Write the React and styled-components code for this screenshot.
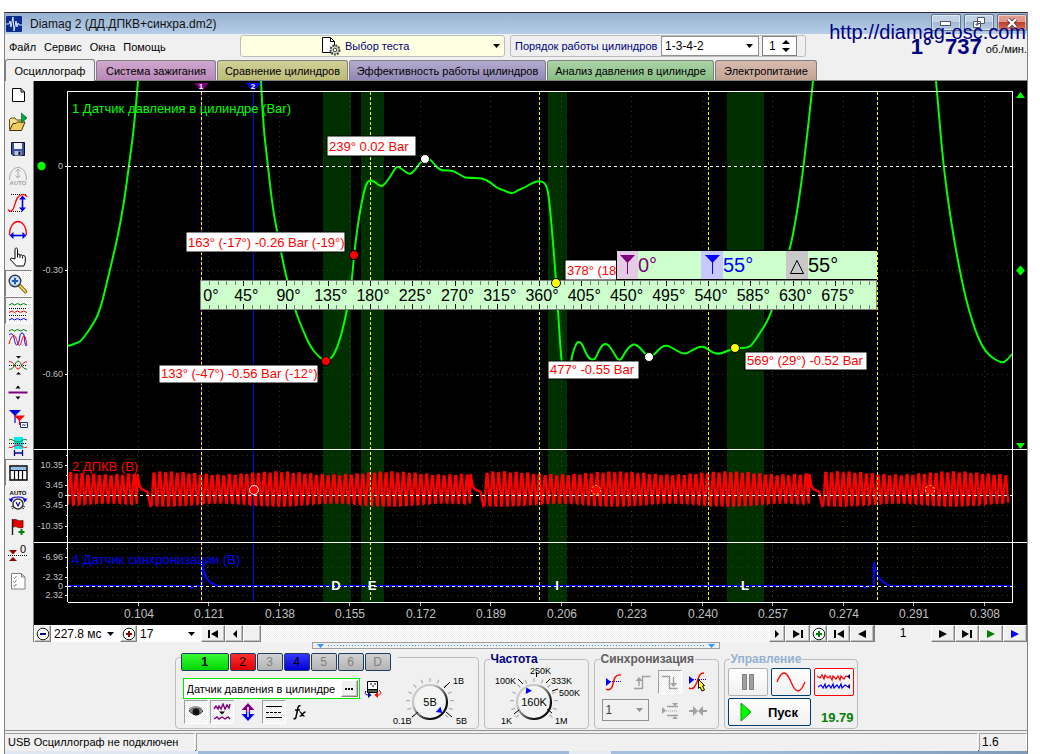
import React, { useState } from 'react';
import styled, { createGlobalStyle, css } from 'styled-components';

const GlobalStyle = createGlobalStyle`
    * { box-sizing: border-box; }
    body {
        margin: 0;
        background: #fff;
        color: #000;
        font-family: "Liberation Sans", Arial, sans-serif;
        font-size: 11px;
    }
    button, input, select {
        font: inherit;
        color: inherit;
        margin: 0;
    }
    svg { flex-shrink: 0; }
    svg text { font-family: "Liberation Sans", Arial, sans-serif; }
`

const dither = css`
    background: repeating-conic-gradient(#fff 0 25%, #ececec 0 50%) 0 0 / 2px 2px;
`

const Page = styled.div`
    padding: 12px 12px 0 4px;
`

const Window = styled.main`
    background: #f0f0f0;
    border-left: 1px solid #808080;
    border-right: 1px solid #808080;
    border-top: 1px solid #302c34;
    position: relative;
`

const TitleBar = styled.header`
    display: flex;
    align-items: center;
    height: 21px;
    padding: 0 0 0 1px;
    gap: 8px;
    font-size: 12px;
    color: #111;
    background: linear-gradient(#98b2cf, #b5cde8);
`

const WindowButtons = styled.div`
    display: flex;
    gap: 3px;
    margin-left: auto;
    align-self: flex-start;
    padding-top: 1px;
`

const WindowButton = styled.button`
    width: 30px;
    height: 17px;
    padding: 0;
    display: flex;
    align-items: center;
    justify-content: center;
    border: 1px solid #5f7590;
    border-radius: 2px;
    box-shadow: inset 0 0 0 1px rgba(255, 255, 255, .5);
    background: ${({ $close }) => $close
        ? 'linear-gradient(#e39a8c 45%, #c0402a 50%, #d2705c)'
        : 'linear-gradient(#c3d3e6 45%, #a3b9d3 50%, #b8cce2)'};
`

const SiteLink = styled.a`
    position: absolute;
    top: 7px;
    right: 1px;
    font-size: 20px;
    line-height: 24px;
    color: #000080;
    text-decoration: none;
`

const MenuRow = styled.div`
    display: flex;
    height: 25px;
    padding-top: 1px;
`

const Menu = styled.nav`
    display: flex;
    align-items: center;
    gap: 8px;
    flex: 0 0 235px;
    padding-left: 4px;
    height: 23px;
`

const MenuItem = styled.button`
    border: 0;
    padding: 0;
    background: none;
`

const TestButton = styled.button`
    display: flex;
    align-items: center;
    justify-content: center;
    gap: 4px;
    width: 265px;
    height: 22px;
    margin-right: 5px;
    padding: 0 4px 0 80px;
    color: #000080;
    background: #ffffe1;
    border: 1px solid #bdbdbd;
    border-radius: 3px;
    svg:last-child { margin-left: auto; }
`

const OrderGroup = styled.div`
    display: flex;
    align-items: center;
    height: 22px;
    width: 296px;
    padding: 0 8px 0 4px;
    gap: 3px;
    color: #000080;
    border: 1px solid #bdbdbd;
    border-radius: 3px;
    label { flex: 1; white-space: nowrap; }
`

const SelectBox = styled.span`
    position: relative;
    display: flex;
    width: ${({ $width }) => $width}px;
    height: ${({ $height }) => $height}px;
    color: ${({ $muted }) => $muted ? '#404040' : '#000'};
    select {
        appearance: none;
        width: 100%;
        height: 100%;
        padding: 0 16px 0 3px;
        font-size: 12px;
        background: ${({ $muted }) => $muted ? '#f0f0f0' : '#fff'};
        border: ${({ $flat }) => $flat ? '0' : '1px solid #909090'};
        border-radius: 0;
    }
    svg {
        position: absolute;
        right: 6px;
        top: 50%;
        margin-top: -2px;
        pointer-events: none;
    }
`

const Spinner = styled.span`
    display: flex;
    align-items: center;
    width: 35px;
    height: 20px;
    padding-right: 5px;
    background: #fff;
    border: 1px solid #808080;
    input {
        width: 100%;
        min-width: 0;
        padding: 0 0 0 6px;
        border: 0;
        outline: 0;
        background: none;
        color: #000;
        font-size: 12px;
    }
`

const Rpm = styled.div`
    display: flex;
    align-items: center;
    margin-left: auto;
    height: 24px;
    color: #000080;
    font-size: 22px;
    font-weight: bold;
    strong:first-child { margin-right: 13px; }
    small {
        margin-left: 4px;
        padding-top: 3px;
        color: #000;
        font-size: 11px;
        font-weight: normal;
    }
`

const TabBar = styled.div`
    display: flex;
    align-items: flex-end;
    height: 22px;
    gap: 1px;
    border-bottom: 1px solid #808080;
`

const Tab = styled.button`
    height: ${({ $active }) => $active ? 22 : 20}px;
    margin-bottom: ${({ $active }) => $active ? -1 : 0}px;
    width: ${({ $width }) => $width}px;
    padding: 0;
    white-space: nowrap;
    border: 1px solid #808080;
    border-bottom: 0;
    border-radius: 3px 3px 0 0;
    background: ${({ $color }) => $color};
`

const Body = styled.div`
    display: flex;
`

const Toolbar = styled.div`
    flex: 0 0 29px;
    display: flex;
    flex-direction: column;
    border-right: 1px solid #808080;
`

const Tool = styled.button`
    width: 27px;
    height: 27px;
    padding: 0;
    display: flex;
    align-items: center;
    justify-content: flex-start;
    border: 1px solid transparent;
    background: none;
    ${({ $pressed }) => $pressed && css`
        ${dither}
        border-color: #808080 #fff #fff #808080;
    `}
`

const Workspace = styled.div`
    flex: 1;
    min-width: 0;
    display: flex;
    flex-direction: column;
`

const Plot = styled.svg`
    display: block;
    width: 100%;
    height: auto;
    background: #000;
`

const ScrollRow = styled.div`
    display: flex;
    height: 17px;
    background: #f0f0f0;
`

const NavButton = styled.button`
    width: ${({ $width }) => $width}px;
    height: 17px;
    padding: 0;
    display: flex;
    align-items: center;
    justify-content: center;
    background: #f0f0f0;
    border: 1px solid;
    border-color: #fff #808080 #808080 #fff;
    box-shadow: inset -1px -1px 0 #c0c0c0;
`

const Track = styled.div`
    flex: 1;
    ${dither}
`

const PageNumber = styled.output`
    width: 57px;
    text-align: center;
    font-size: 12px;
    line-height: 17px;
    border-left: 1px solid #808080;
`

const Splitter = styled.div`
    display: flex;
    align-items: center;
    justify-content: space-between;
    width: 408px;
    height: 7px;
    margin: 0 auto;
    padding: 0 4px;
    border: 1px solid #a0a0a0;
    i {
        flex: 1;
        margin: 0 4px;
        height: 1px;
        background: repeating-linear-gradient(90deg, #3399ff 0 1px, transparent 1px 3px);
    }
    svg { display: block; }
`

const Dock = styled.div`
    display: flex;
    justify-content: center;
    gap: 5px;
    height: 81px;
    padding-top: 4px;
`

const Group = styled.fieldset`
    width: ${({ $width }) => $width}px;
    height: 76px;
    margin: 0;
    padding: 0 3px;
    min-width: 0;
    border: 1px solid #bdbdbd;
    border-radius: 4px;
    legend {
        height: 12px;
        padding: 0 1px;
        margin-left: 2px;
        font-size: 12px;
        line-height: 12px;
        font-weight: bold;
        color: ${({ $color }) => $color};
    }
`

const ChannelGroup = styled.section`
    display: flex;
    width: 304px;
    height: 72px;
    margin-top: 4px;
    border: 1px solid #bdbdbd;
    border-radius: 4px;
`

const ChannelColumn = styled.div`
    width: 210px;
    padding-left: 5px;
    margin-top: -5px;
`

const ChannelRow = styled.div`
    display: flex;
    gap: 1px;
    width: 217px;
    background: #f0f0f0;
`

const Channel = styled.button`
    width: ${({ $wide }) => $wide ? 48 : 26}px;
    height: 18px;
    padding: 0;
    font-size: 12px;
    font-weight: ${({ $wide }) => $wide ? 'bold' : 'normal'};
    color: ${({ $on }) => $on ? '#000' : '#808080'};
    background: ${({ $on }) => $on || 'linear-gradient(#d2d2d2, #b4b4b4)'};
    border: 1px solid #1d3c66;
    border-radius: 2px;
`

const SensorRow = styled.div`
    display: flex;
    align-items: center;
    gap: 4px;
    margin: 7px 0 1px 2px;
`

const SensorField = styled.div`
    display: flex;
    align-items: center;
    width: 177px;
    height: 21px;
    padding-right: 1px;
    background: #fff;
    border: 1px solid #00e800;
    input {
        flex: 1;
        min-width: 0;
        padding: 0 0 0 3px;
        border: 0;
        outline: 0;
        background: none;
    }
`

const ToolRow = styled.div`
    display: flex;
    gap: 2px;
    margin-left: 3px;
`

const SmallTool = styled.button`
    width: 24px;
    height: 24px;
    padding: 0;
    display: flex;
    align-items: center;
    justify-content: center;
    border: 1px solid transparent;
    background: none;
    ${({ $pressed }) => $pressed && css`
        ${dither}
        border-color: #a0a0a0 #fff #fff #a0a0a0;
    `}
`

const Knob = styled.svg`
    display: block;
    overflow: visible;
`

const SyncGrid = styled.div`
    display: grid;
    grid-template-columns: repeat(4, 24px);
    column-gap: 4px;
    row-gap: 5px;
    padding: 5px 0 0 4px;
    > span { grid-column: span 2; }
`

const ControlGrid = styled.div`
    display: grid;
    grid-template-columns: 40px 40px 40px;
    gap: 2px 3px;
    padding-top: 3px;
`

const ControlButton = styled.button`
    display: flex;
    align-items: center;
    justify-content: center;
    gap: 16px;
    height: 28px;
    padding: 0;
    background: linear-gradient(#fff, #f0f0f0);
    border: 1px solid ${({ $edge }) => $edge};
    border-radius: 2px;
    font-size: 13px;
    font-weight: bold;
    grid-column: span ${({ $span }) => $span || 1};
`

const Voltage = styled.output`
    align-self: end;
    justify-self: end;
    padding-bottom: 1px;
    color: #008000;
    font-size: 13px;
    font-weight: bold;
`

const StatusBar = styled.footer`
    display: grid;
    grid-template-columns: 190px 1fr 48px;
    gap: 1px;
    height: 20px;
    padding-top: 2px;
    border-top: 1px solid #909090;
    span {
        padding-left: 3px;
        line-height: 16px;
        white-space: nowrap;
        border: 1px solid;
        border-color: #a0a0a0 #fff #f0f0f0 #a0a0a0;
    }
    span:first-child { border-left-color: #f0f0f0; padding-left: 2px; }
    span:last-child { font-size: 12px; padding-left: 2px; }
`

const TaskStrip = styled.div`
    height: 4px;
    border-top: 1px solid #40454c;
    background: linear-gradient(90deg, #dfe8f2 0 193px, #9cb9da 193px 564px, #e4ebf3 564px 606px, #a4bfdd 606px 70%, #7d9ab9);
`

const range = n => Array.from({ length: n }, (_, i) => i)

function ArrowDown({ color = '#000' }) {
    return <svg width="7" height="4" viewBox="0 0 7 4"><path d="M0 0h7L3.5 4z" fill={color} /></svg>
}

// ---- toolbar icons, all on a 24x24 grid ----

const dots = { stroke: '#000', strokeDasharray: '1 1', fill: 'none' }

const icons = {
    new: <path d="M6.500 5.500h8.500l3.500 3.500v9.500h-12zM15 5.500v3.500h3.500" fill="#fff" stroke="#000" />,
    open: <>
        <path d="M3.500 19V9.500l1.500-1.500h4l1.500 2h6v3" fill="#f5df8a" stroke="#5c4a10" />
        <path d="M3.500 20.500l3.500-7h3l1.500-1.500h7.500l-3.500 8.500z" fill="#f0cf60" stroke="#3c3010" />
        <path d="M15.500 3v10l5.500-5z" fill="#00a838" stroke="#00501c" strokeWidth=".6" />
    </>,
    save: <>
        <path d="M5.500 5.500h13v13h-11.500l-1.500-1.500z" fill="#3f4f9c" stroke="#101030" />
        <path d="M8 6h8v6H8z" fill="#eef2ff" />
        <path d="M8.500 14h7v4.500h-7z" fill="#b8c0d0" />
        <path d="M12.500 14.500h2v3.500h-2z" fill="#101030" />
    </>,
    autoHeight: <>
        <path d="M3.500 16c0-8 4-12.500 8.500-12.500s8.500 4.500 8.500 12.500M12 5v9M9.500 7.500L12 5l2.500 2.500M9.500 11.500L12 14l2.500-2.500" fill="none" stroke="#a8a8a8" />
        <text x="12" y="21" fontSize="6" fontWeight="bold" textAnchor="middle" fill="#a0a0a0">AUTO</text>
    </>,
    height: <>
        <path d="M5 3.500h16M3 20.500h14" {...dots} />
        <path d="M2 18.500c1 2 4 2.500 5 0 3-7 3-13 8-14.500 3-1 5 0 6 2" fill="none" stroke="#f00" strokeWidth="1.300" />
        <path d="M16.500 6v13" stroke="#0000e8" strokeWidth="1.600" />
        <path d="M16.500 4.500l3.500 4h-7zM16.500 20.500l3.500-4h-7z" fill="#0000e8" />
    </>,
    width: <>
        <path d="M3.500 17v-1c0-7 4-12.500 8.500-12.500s8.500 5.500 8.500 12.500v1" fill="none" stroke="#f00" strokeWidth="1.300" />
        <path d="M6 17.500h12" stroke="#0000e8" strokeWidth="1.600" />
        <path d="M3.500 17.500l4-3.500v7zM20.500 17.500l-4-3.500v7z" fill="#0000e8" />
    </>,
    hand: <path d="M9 14V4.500c0-2 2.500-2 2.500 0V10c.5-1.500 2.500-1.200 2.500.5.500-1.300 2.500-1 2.500.7.500-1 2.800-.7 2.800 1V17l-1.500 4h-7.500l-5.500-6c-1-1.500.5-2.500 2-1.500zM11.500 10v2.500M14 10.500v2.500M16.500 11.500v2" fill="#fff" stroke="#000" />,
    zoom: <>
        <path d="M13.500 13.500l6 6" stroke="#8a6a10" strokeWidth="3.600" strokeLinecap="round" />
        <path d="M14 14l5.500 5.500" stroke="#ffd860" strokeWidth="1.600" strokeLinecap="round" />
        <circle cx="9" cy="9" r="5.800" fill="#cfe4fb" stroke="#303c50" strokeWidth="1.400" />
        <path d="M9 5.800v6.400M5.800 9h6.400" stroke="#2458b8" strokeWidth="2" />
    </>,
    stacked: <>
        <path d="M3 6l3-1.500 2.500 1.500 3-1.500 3 1.500 3-1.500 3.500 1.500" fill="none" stroke="#008000" />
        <path d="M3 9.500h18M3 16.500h18" {...dots} />
        <path d="M3 13.500l3-1.500 2.500 1.500 3-1.500 3 1.500 3-1.500 3.500 1.500" fill="none" stroke="#f00" />
        <path d="M3 21l3-1.500 2.500 1.500 3-1.500 3 1.500 3-1.500 3.500 1.500" fill="none" stroke="#00f" />
    </>,
    overlaid: <>
        <path d="M3 5l3-1.500 2.500 1.500 3-1.500 3 1.500 3-1.500 3.500 1.500" fill="none" stroke="#008000" />
        <path d="M3 9c2-2 4-2 5 3s2 9 4 6 1-11 4-11 2 6 3 10 1 3 2 2" fill="none" stroke="#00f" />
        <path d="M3 18c2-8 5-11 7-6s2 9 4 7 2-9 4-9 2 6 3 9" fill="none" stroke="#f00" />
    </>,
    cross: <>
        <path d="M3 12.500h18" {...dots} />
        <path d="M3 9c5-2 6 7 9 7s4-8 9-7" fill="none" stroke="#f00" />
        <path d="M3 16c5 2 6-8 9-8s4 9 9 8" fill="none" stroke="#008000" />
        <path d="M10 3h5l-2.500 2.500zM10 21.500h5l-2.500-2.500z" fill="#000" />
    </>,
    divider: <>
        <path d="M2.500 12.500h19" stroke="#800080" strokeWidth="2" />
        <path d="M9.500 8.500h5l-2.500-3zM9.500 16.500h5l-2.500 3z" fill="#000" />
    </>,
    flags: <>
        <path d="M3 3h12l-6 6z" fill="#0000e8" /><path d="M9 6v10" stroke="#0000e8" strokeWidth="1.200" />
        <path d="M8 8.500h11l-5.500 5.500z" fill="#f00" /><path d="M13.500 10v8" stroke="#f00" strokeWidth="1.200" />
        <path d="M14.500 15.500h7v5h-7z" fill="#fff" stroke="#203080" /><path d="M16 18.500l1.500-1 1.500 1 1-1" fill="none" stroke="#203080" />
    </>,
    span: <>
        <path d="M8 3h9v12H8z" fill="#00e8f0" />
        <path d="M3 6c3-2 5 2 9 2s5-4 9-2" fill="none" stroke="#008000" />
        <path d="M3 9.500h18" {...dots} />
        <path d="M3 13c3 2 5-2 9-2s5 4 9 2" fill="none" stroke="#f00" />
        <path d="M8.500 16v6M16.500 16v6M9 19h7" stroke="#0000a0" strokeWidth="1.300" />
    </>,
    table: <>
        <path d="M4 5h17v14H4z" fill="#fff" stroke="#000" strokeWidth="1.400" />
        <path d="M5 6h15v3H5z" fill="#8cc0f0" />
        <path d="M4 9.500h17M8.500 9v10M12.500 9v10M16.500 9v10" stroke="#000" strokeWidth="1.200" />
    </>,
    autoVolt: <>
        <text x="12" y="7" fontSize="6" fontWeight="bold" textAnchor="middle">AUTO</text>
        <path d="M4 13c1-3 4-4 8-4s7 1 8 4" fill="none" stroke="#0000e8" strokeWidth="1.200" />
        <path d="M2.500 10.500l3 4 1.500-3.500zM21.500 10.500l-3 4-1.500-3.500z" fill="#0000e8" />
        <circle cx="12" cy="16" r="5" fill="#fff" stroke="#303030" strokeWidth="1.400" />
        <path d="M10 14l2 4 2-4" fill="none" stroke="#0000c0" strokeWidth="1.200" />
        <path d="M5 19l2-1M19 19l-2-1M6 21l2-1.500M18 21l-2-1.500" stroke="#303030" />
    </>,
    flag: <>
        <path d="M6.500 4v16" stroke="#202020" strokeWidth="1.400" />
        <path d="M7 5c3-2 5 2 10 .5v7c-4 1.500-6-2-10-.5z" fill="#e80000" stroke="#700000" strokeWidth=".8" />
        <path d="M15.500 14v6M12.500 17h6" stroke="#008000" strokeWidth="2" />
    </>,
    zero: <>
        <path d="M2 13.500h19" {...dots} />
        <path d="M3 8h8l-4 4.500zM3 19h8l-4-4z" fill="#900000" />
        <text x="14" y="11" fontSize="11">0</text>
    </>,
    checklist: <>
        <path d="M5.500 4.500h10l3.500 3.500v12h-13.500zM15.500 4.500v3.500h3.500" fill="#fff" stroke="#808080" />
        <path d="M7.500 8.500l1 1 2-2.500M7.500 12.500l1 1 2-2.500M7.500 16.500l1 1 2-2.500" fill="none" stroke="#808080" />
    </>,
}

const tools = [
    ['new', 'Новый'], ['open', 'Открыть'], ['save', 'Сохранить'], ['autoHeight', 'Авто'],
    ['height', 'Размах'], ['width', 'Период'], ['hand', 'Сдвиг'], ['zoom', 'Масштаб', true],
    ['stacked', 'Раздельно', true], ['overlaid', 'Вместе'], ['cross', 'Наложение'], ['divider', 'Граница'],
    ['flags', 'Маркеры'], ['span', 'Интервал'], ['table', 'Таблица', true], ['autoVolt', 'Автомасштаб'],
    ['flag', 'Метка'], ['zero', 'Ноль'], ['checklist', 'Отчёт'],
]

// ---- plot ----

const gridX = [138, 208, 279, 349, 420, 490, 561, 631, 702, 772, 843, 913, 984]
const gridY = [270, 374, 455, 465, 475, 485, 505, 515, 526, 536, 548, 557, 567, 577, 595]
const timeLabels = ['0.104', '0.121', '0.138', '0.155', '0.172', '0.189', '0.206', '0.223', '0.240', '0.257', '0.274', '0.291', '0.308']
const valueLabels = [
    [166, '0'], [270, '-0.30'], [374, '-0.60'],
    [465, '10.35'], [485, '3.45'], [495, '0'], [505, '-3.45'], [526, '-10.35'],
    [557, '-6.96'], [577, '-2.32'], [586, '0'], [595, '2.32'],
]
const phases = [[323, 28, 'D', 336], [361, 23, 'E', 372], [548, 19, 'I', 557], [727, 37, 'L', 745]]

const pressure = [
    '68,346 72,345 76,343 80,342 84,337 92,326 100,311 108,278 113,257 118,235 124,203 129,165 134,128 138,81',
    '261,81 263,123 268,167 273,210 278,236 282,257 287,280 295,310 302,328 310,346 317,355 322,359 326,361 332,358 338,346 343,328 347,310 352,280 354,255 358,223 363,195 367,182 371,180 375,182 381,187 385,184 390,177 396,167 399,167 403,170 410,175 415,170 420,163 425,158 430,159 434,164 441,171 453,170 463,177 469,178 482,178 490,182 497,188 503,190 510,193 514,193 518,190 524,188 532,183 538,181 544,182 547,187 549,198 552,230 556,280 558,310 561,357 563,370 570,370 572,355 575,347 577,342 581,342 585,351 589,359 595,360 598,352 603,344 608,344 614,353 618,360 621,360 625,352 632,344 637,345 642,350 649,358 655,354 661,347 667,345 674,349 683,354 688,353 694,349 702,346 708,349 713,353 720,354 727,351 735,348 747,348 752,345 760,333 767,322 772,310 781,282 790,248 794,230 801,187 808,128 813,81',
    '936,81 940,128 944,170 950,215 958,262 966,300 975,330 983,348 991,357 998,361 1003,363 1008,359 1012,354',
]

// rounds the corners between samples by curving through the midpoints
function smooth(points) {
    const list = points.split(' ').map(pair => pair.split(',').map(Number))
    const last = list[list.length - 1]
    const curves = list.slice(1, -1).map(([x, y], i) => {
        const [nx, ny] = list[i + 2]
        return `Q${x} ${y} ${(x + nx) / 2} ${(y + ny) / 2}`
    })
    return `M${list[0].join(' ')}${curves.join('')}L${last.join(' ')}`
}

// toothed wheel signal with one missing tooth pair per turn
function crankSignal() {
    const gaps = [134, 469, 808]
    const points = []
    let x = 68
    let k = 0
    while (x < 1008) {
        const gap = gaps.find(g => x >= g && x < g + 6)
        if (gap) {
            points.push([x, 474], [x + 2, 486], [x + 4, 489], [x + 10, 492], [x + 12, 502], [x + 13, 506])
            x += 14
        } else {
            const swell = Math.sin((x - 134) / 338 * Math.PI * 6)
            const top = 474 - swell * 1.500 + (k % 2)
            const bottom = 504 + swell * 1.500
            points.push([x, bottom], [x + 1, 488], [x + 2, top], [x + 3, top], [x + 4, 491], [x + 5, bottom])
            x += 5.800
        }
        k += 1
    }
    return points.map(([px, py]) => `${px.toFixed(1)},${py.toFixed(1)}`).join(' ')
}

const callouts = [
    { x: 327, y: 136, w: 89, h: 20, text: '239° 0.02 Bar' },
    { x: 186, y: 232, w: 159, h: 20, text: '163° (-17°) -0.26 Bar (-19°)' },
    { x: 159, y: 365, w: 159, h: 18, text: '133° (-47°) -0.56 Bar (-12°)' },
    { x: 565, y: 260, w: 52, h: 20, text: '378° (18' },
    { x: 548, y: 361, w: 91, h: 18, text: '477° -0.55 Bar' },
    { x: 745, y: 352, w: 122, h: 18, text: '569° (29°) -0.52 Bar' },
]

function AngleRuler() {
    const step = 676 / 80
    return (
        <g>
            <rect x="200.500" y="280.500" width="676" height="29" fill="#ccffcc" stroke="#808080" />
            <g shapeRendering="crispEdges">
                {range(79).map(i => {
                    const major = (i + 1) % 5 === 0
                    const x = Math.round(201 + (i + 1) * step)
                    const len = major ? 5 : 4
                    return <path key={i} d={`M${x}.5 281v${len}M${x}.5 309v-${len}`} stroke={major ? '#000' : '#808080'} />
                })}
            </g>
            {range(16).map(i => (
                <text key={i} x={i ? 204 + i * step * 5 : 211} y="301" fontSize="16" textAnchor="middle">{i * 45}°</text>
            ))}
        </g>
    )
}

function MarkerPanel() {
    return (
        <g>
            <rect x="616" y="250" width="261" height="30" fill="#000" />
            <rect x="617" y="251" width="260" height="28" fill="#ccffcc" />
            <rect x="617" y="251" width="21" height="28" fill="#e4cce4" />
            <rect x="701" y="251" width="22" height="28" fill="#c8c8ff" />
            <rect x="786" y="251" width="22" height="28" fill="#c8c8c8" />
            <path d="M620 255h15l-7.500 8z" fill="#800080" />
            <path d="M627.500 262v12" stroke="#800080" />
            <path d="M705 255h15l-7.500 8z" fill="#00f" />
            <path d="M712.500 262v12" stroke="#00f" />
            <path d="M790.500 273.500h13l-6.500-13z" fill="none" stroke="#000" />
            <g fontSize="20">
                <text x="638" y="272" fill="#800080">0°</text>
                <text x="723" y="272" fill="#00f">55°</text>
                <text x="808" y="272">55°</text>
            </g>
        </g>
    )
}

function Oscillogram() {
    return (
        <Plot viewBox="34 81 993 544" role="img" aria-label="Осциллограмма">
            {phases.map(([x, w]) => <rect key={x} x={x} y="92" width={w} height="510" fill="#003000" />)}
            <g stroke="#3a3a14" strokeDasharray="1 4" shapeRendering="crispEdges">
                {gridX.map(x => <path key={x} d={`M${x}.5 96V602`} />)}
                {gridY.map(y => <path key={y} d={`M72 ${y}.5H1012`} />)}
            </g>

            <g shapeRendering="crispEdges">
                <path d="M201.500 92V602" stroke="#800080" />
                <path d="M253.500 92V602" stroke="#00f" />
            </g>

            <polyline points={crankSignal()} fill="none" stroke="#f00" strokeWidth="2.400" />
            <path d="M68 586H190l2 2 3-2h7V564l2 8 3 7 4 4 6 3H862l3 2 3-2h6V562l2 9 3 7 4 4 7 4H1012" fill="none" stroke="#00f" strokeWidth="2" />
            {pressure.map(points => <path key={points} d={smooth(points)} fill="none" stroke="#0f0" strokeWidth="2" />)}

            <g stroke="#ff0" strokeDasharray="3 2" shapeRendering="crispEdges">
                {[201, 370, 539, 708, 877].map(x => <path key={x} d={`M${x}.5 92V602`} />)}
            </g>
            <g stroke="#fff" strokeDasharray="3 3" shapeRendering="crispEdges">
                {[166, 495, 586].map(y => <path key={y} d={`M68 ${y}.5H1012`} />)}
            </g>
            <g stroke="#fff" fill="none" shapeRendering="crispEdges">
                <path d="M67.500 602V91.500H1012.500V602.500H67.500M34 449.500H1027M34 542.500H1027" />
                {valueLabels.map(([y]) => <path key={y} d={`M64.500 ${y}.5h3`} />)}
                {[455, 475, 515, 536, 548, 567].map(y => <path key={y} d={`M65.500 ${y}.5h2`} />)}
            </g>
            <g stroke="#c0c0c0" shapeRendering="crispEdges">
                {gridX.map(x => <path key={x} d={`M${x}.5 603v3`} />)}
            </g>

            <g fill="#c0c0c0">
                {valueLabels.map(([y, text]) => <text key={y} x="63" y={y + 3} fontSize="9" textAnchor="end">{text}</text>)}
                {timeLabels.map((text, i) => <text key={text} x={gridX[i] + 1} y="618" fontSize="12" textAnchor="middle">{text}</text>)}
            </g>

            <g fontSize="13">
                <text x="72" y="113" fill="#0f0">1 Датчик давления в цилиндре (Bar)</text>
                <text x="72" y="471" fill="#f00">2 ДПКВ (В)</text>
                <text x="72" y="564" fill="#00f">4 Датчик синхронизации (В)</text>
            </g>
            <g fontSize="13" fontWeight="bold" fill="#fff" textAnchor="middle">
                {phases.map(([, , letter, x]) => <text key={letter} x={x} y="590">{letter}</text>)}
            </g>

            <path d="M194 83h15l-7.500 8z" fill="#800080" />
            <path d="M246 83h15l-7.500 8z" fill="#00f" />
            <g fontSize="8" fontWeight="bold" fill="#fff" textAnchor="middle">
                <text x="201" y="89">1</text>
                <text x="253" y="89">2</text>
            </g>

            <circle cx="254" cy="490" r="4.500" fill="#f00" stroke="#fff" />
            <circle cx="596" cy="490" r="4.500" fill="#f00" stroke="#ff0" strokeDasharray="2 2" />
            <circle cx="930" cy="490" r="4.500" fill="#f00" stroke="#ff0" strokeDasharray="2 2" />

            {callouts.map(({ x, y, w, h, text }) => (
                <g key={text}>
                    <rect x={x} y={y} width={w} height={h} fill="#fff" stroke="#000" />
                    <text x={x + 2} y={y + h - 5} fontSize="13" fill="#f00">{text}</text>
                </g>
            ))}
            <AngleRuler />
            <MarkerPanel />

            <g stroke="#000">
                <circle cx="326" cy="361" r="4.500" fill="#f00" />
                <circle cx="354" cy="255" r="4.500" fill="#f00" />
                <circle cx="425" cy="159" r="4.500" fill="#fff" />
                <circle cx="649" cy="357" r="4.500" fill="#fff" />
                <circle cx="556" cy="283" r="4.500" fill="#ff0" />
                <circle cx="735" cy="348" r="4.500" fill="#ff0" />
            </g>
            <g fill="#0f0">
                <circle cx="41.500" cy="166" r="4.200" />
                <path d="M1016 98h9l-4.500-6zM1020.500 265.500l4.500 5-4.500 5-4.500-5zM1016 443h9l-4.500 6z" />
            </g>
        </Plot>
    )
}

// ---- bottom dock ----

function Dial({ width, cx, cy, value, labels, pointer }) {
    return (
        <Knob width={width} height="60" viewBox={`0 0 ${width} 60`}>
            <defs>
                <linearGradient id={`rim${value}`} x1="0" y1="0" x2="1" y2="1">
                    <stop offset=".3" stopColor="#c8c8c8" />
                    <stop offset=".75" stopColor="#101010" />
                </linearGradient>
            </defs>
            <g stroke="#a0a0a0">
                {range(13).map(i => (
                    <path key={i} d="M0 -20v-4" transform={`translate(${cx} ${cy}) rotate(${-130 + i * 260 / 12})`} />
                ))}
            </g>
            <circle cx={cx} cy={cy} r="17" fill="#f4f4f4" stroke={`url(#rim${value})`} strokeWidth="2.200" />
            <path d="M-3.500 -11h7L0 -16.500z" fill="#00f" transform={`translate(${cx} ${cy}) rotate(${pointer})`} />
            <text x={cx} y={cy + 4} fontSize="11" textAnchor="middle">{value}</text>
            {labels.map(({ x, y, text, mark }) => (
                <g key={text}>
                    <path d={mark} stroke="#000" />
                    <text x={x} y={y} fontSize="9">{text}</text>
                </g>
            ))}
        </Knob>
    )
}

const voltLabels = [
    { x: 67, y: 14, text: '1В', mark: 'M61 18l6-6' },
    { x: 7, y: 54, text: '0.1В', mark: 'M35 42l-6 5' },
    { x: 70, y: 54, text: '5В', mark: 'M63 42l6 5' },
]

const rateLabels = [
    { x: 7, y: 16, text: '100K', mark: 'M30 14l5 5' },
    { x: 42, y: 6, text: '250K', mark: 'M48.500 7v5' },
    { x: 63, y: 16, text: '333K', mark: 'M58 18l4-4' },
    { x: 71, y: 28, text: '500K', mark: 'M64 26l6-2' },
    { x: 13, y: 56, text: '1K', mark: 'M31 45l-5 4' },
    { x: 67, y: 56, text: '1M', mark: 'M59 44l5 4' },
]

const channels = [
    ['1', 'linear-gradient(#38f838, #00d800)'], ['2', 'linear-gradient(#ff3030, #e00000)'], ['3'],
    ['4', 'linear-gradient(#3838ff, #0000d8)'], ['5'], ['6'], ['D'],
]

const Play = ({ color = '#000', bar }) => (
    <svg width="12" height="8"><path d={bar ? 'M1 0v8l7-4zM9 0h2v8h-2z' : 'M2 0v8l8-4z'} fill={color} /></svg>
)
const Back = ({ bar }) => (
    <svg width="12" height="8"><path d={bar ? 'M11 0v8l-7-4zM1 0h2v8h-2z' : 'M10 0v8l-8-4z'} /></svg>
)
const Round = ({ plus, color }) => (
    <svg width="14" height="14">
        <circle cx="7" cy="7" r="5.800" fill="#fff" stroke="#202020" />
        <path d={plus ? 'M4 7h6M7 4v6' : 'M4 7h6'} stroke={color} strokeWidth="2" />
    </svg>
)

function ChannelPanel() {
    const [sensor, setSensor] = useState('Датчик давления в цилиндре')
    return (
        <ChannelGroup>
            <ChannelColumn>
                <ChannelRow>
                    {channels.map(([name, color], i) => <Channel key={name} $on={color} $wide={i === 0}>{name}</Channel>)}
                </ChannelRow>
                <SensorRow>
                    <SensorField>
                        <input aria-label="Датчик" value={sensor} onChange={e => setSensor(e.target.value)} />
                        <NavButton $width={17} aria-label="Выбрать датчик">
                            <svg width="8" height="2"><path d="M0 0h2v2H0zM3 0h2v2H3zM6 0h2v2H6z" /></svg>
                        </NavButton>
                    </SensorField>
                    <svg width="18" height="18" viewBox="0 0 18 18">
                        <path d="M3.500 1.500h10v8h-10z" fill="#fff" stroke="#000" />
                        <path d="M3.500 9.500h10v3h-10z" fill="#406040" stroke="#000" />
                        <path d="M6 4h2M10 4h2M8 6h2" stroke="#000" />
                        <path d="M2 11c-2 3 0 4 3 4" fill="none" stroke="#000080" /><path d="M4 12v6l3.500-3z" fill="#000080" />
                        <path d="M15 10c3 3 2 5-1 5" fill="none" stroke="#f00" /><path d="M14 12v6l-3.500-3z" fill="#f00" />
                    </svg>
                </SensorRow>
                <ToolRow>
                    <SmallTool $pressed aria-label="Показать">
                        <svg width="16" height="12" viewBox="0 0 16 12">
                            <path d="M1 5c4-4 9-4 14 0-4 5-9 5-14 0z" fill="#909090" stroke="#404040" />
                            <circle cx="8" cy="6" r="3.500" fill="#101010" /><path d="M1 3c4-3 9-3 13 0" fill="none" stroke="#707070" />
                        </svg>
                    </SmallTool>
                    <SmallTool $pressed aria-label="Фильтр">
                        <svg width="18" height="18" viewBox="0 0 18 18">
                            <path d="M1 6l2-3 2 3 1-3 2 3 2-5 2 5 2-4 2 3 1-4M1 16l3-2 2 2 3-2 3 2 3-2 2 2" fill="none" stroke="#800080" strokeWidth="1.400" />
                            <path d="M6 8.500h6l-3 3z" />
                        </svg>
                    </SmallTool>
                    <SmallTool aria-label="Инверсия">
                        <svg width="16" height="20" viewBox="0 0 16 20">
                            <path d="M8 1l6.500 7H10v2H6V8H1.500z" fill="#800080" />
                            <path d="M8 19l6.500-7H10v-2H6v2H1.500z" fill="#00f" />
                            <path d="M8 5v10" stroke="#fff" strokeWidth="1.400" />
                        </svg>
                    </SmallTool>
                    <SmallTool $pressed aria-label="Уровни">
                        <svg width="18" height="16" viewBox="0 0 18 16" shapeRendering="crispEdges">
                            <path d="M1 2.500h16M1 13.500h16" stroke="#000" /><path d="M1 8.500h16" stroke="#000" strokeDasharray="3 1" />
                        </svg>
                    </SmallTool>
                    <SmallTool aria-label="Функция">
                        <svg width="16" height="18" viewBox="0 0 16 18">
                            <path d="M8.500 3c-2-1-2.500 1-3 4l-1.500 7c-.5 2-1.500 2-2.500 1.500M3 7h5" fill="none" stroke="#000" strokeWidth="1.500" />
                            <path d="M7.500 9c2-1 2 4.500 5 4M13.500 9c-3 0-3 5-6 4" fill="none" stroke="#000" strokeWidth="1.300" />
                        </svg>
                    </SmallTool>
                </ToolRow>
            </ChannelColumn>
            <Dial width={90} cx={44} cy={44} value="5В" labels={voltLabels.map(l => ({ ...l, y: l.y + 12, mark: l.mark.replace(/^M(\d+) (\d+)/, (_, x, y) => `M${x - 3} ${+y + 12}`) }))} pointer={132} />
        </ChannelGroup>
    )
}

function SyncPanel() {
    return (
        <Group $width={125} $color="#606060">
            <legend>Синхронизация</legend>
            <SyncGrid>
                <SmallTool aria-label="Уровень">
                    <svg width="18" height="18" viewBox="0 0 18 18">
                        <path d="M1 8.500h16" stroke="#00f" strokeDasharray="1 1" /><path d="M1 5v8l5-4z" fill="#00f" />
                        <path d="M1 16c3 2 6 0 7-5s2-10 8-9" fill="none" stroke="#f00" strokeWidth="1.400" />
                    </svg>
                </SmallTool>
                <SmallTool aria-label="Фронт">
                    <svg width="18" height="18" viewBox="0 0 18 18">
                        <path d="M1 15.500h8.500v-12h8M6 13V6" fill="none" stroke="#a0a0a0" strokeWidth="1.400" /><path d="M2.500 8h7l-3.500-4z" fill="#a0a0a0" />
                    </svg>
                </SmallTool>
                <SmallTool $pressed aria-label="Спад">
                    <svg width="18" height="18" viewBox="0 0 18 18">
                        <path d="M1 3.500h7.500v12h8M12.500 4v7" fill="none" stroke="#a0a0a0" strokeWidth="1.400" /><path d="M9 10h7l-3.500 4z" fill="#a0a0a0" />
                    </svg>
                </SmallTool>
                <SmallTool aria-label="Указать уровень">
                    <svg width="20" height="20" viewBox="0 0 20 20">
                        <path d="M1 7.500h18" stroke="#00f" strokeDasharray="1 1" /><path d="M1 4v8l5-4z" fill="#00f" />
                        <path d="M1 16c4 2 6-1 8-6s2-9 7-9" fill="none" stroke="#f00" strokeWidth="1.400" />
                        <path d="M10.500 7.500l6 6-2 .5 2 4-2.500 1-2-4-1.500 1.500z" fill="#ff0" stroke="#000" />
                    </svg>
                </SmallTool>
                <SelectBox $width={47} $height={22} $muted>
                    <select aria-label="Канал синхронизации" defaultValue="1"><option>1</option><option>2</option></select>
                    <ArrowDown color="#909090" />
                </SelectBox>
                <SmallTool aria-label="Окно">
                    <svg width="18" height="18" viewBox="0 0 18 18">
                        <path d="M6 4.500h11M6 13.500h11" stroke="#a0a0a0" strokeWidth="1.400" /><path d="M5 9h11" stroke="#a0a0a0" strokeDasharray="1 1" />
                        <path d="M1 5v7l4-3.500zM11 1h6l-3 3zM11 17h6l-3-3z" fill="#a0a0a0" />
                    </svg>
                </SmallTool>
                <SmallTool aria-label="Сжать">
                    <svg width="20" height="12" viewBox="0 0 20 12"><path d="M1 5h4V1l5 5-5 5V7H1zM19 5h-4V1l-5 5 5 5V7h4z" fill="#a0a0a0" /></svg>
                </SmallTool>
            </SyncGrid>
        </Group>
    )
}

function ControlPanel() {
    return (
        <Group $width={134} $color="#94b0d0">
            <legend>Управление</legend>
            <ControlGrid>
                <ControlButton $edge="#b0b0b0" aria-label="Пауза">
                    <svg width="12" height="16"><path d="M.5 .5h4v15h-4zM7.500 .5h4v15h-4z" fill="#a0a0a0" stroke="#808080" /></svg>
                </ControlButton>
                <ControlButton $edge="#003c74" aria-label="Одна развёртка">
                    <svg width="30" height="20" viewBox="0 0 30 20"><path d="M1 10c5-12 9-12 14 0s9 12 14 0" fill="none" stroke="#f00" strokeWidth="1.300" /></svg>
                </ControlButton>
                <ControlButton $edge="#f00" aria-label="Непрерывно">
                    <svg width="34" height="18" viewBox="0 0 34 18">
                        <path d="M0 3l3 2 2-3 2 4 1-4 3 3 2-2 2 4 1-4 3 3 2-3 2 4 1-4 3 3 2-3 3 1" fill="none" stroke="#f00" strokeWidth="1.200" />
                        <path d="M1 14l3-2 2 3 2-4 1 4 3-3 2 3 2-4 1 4 3-3 2 3 2-4 1 4 3-3 3 2" fill="none" stroke="#00f" strokeWidth="1.200" />
                        <path d="M33 1v5l-3-2.500zM33 11v5l-3-2.500z" fill="#000080" />
                    </svg>
                </ControlButton>
                <ControlButton $edge="#003c74" $span={2}>
                    <svg width="12" height="20"><path d="M1 1v18l10-9z" fill="#0f0" stroke="#00a000" /></svg>
                    Пуск
                </ControlButton>
                <Voltage>19.79</Voltage>
            </ControlGrid>
        </Group>
    )
}

function App() {
    const [cylinder, setCylinder] = useState('1')
    return (
        <Page>
            <GlobalStyle />
            <Window>
                <TitleBar>
                    <svg width="16" height="16" viewBox="0 0 16 16">
                        <rect width="16" height="16" rx="1" fill="#0c2c8c" />
                        <path d="M0 8h3l1-3 1 6 2-10 1 14 2-10 1 6 1-4 1 2h3" fill="none" stroke="#d8e8ff" />
                    </svg>
                    Diamag 2 (ДД.ДПКВ+синхра.dm2)
                    <WindowButtons>
                        <WindowButton aria-label="Свернуть">
                            <svg width="12" height="6"><rect x=".5" y="1.500" width="10" height="4" fill="#fff" stroke="#505868" /></svg>
                        </WindowButton>
                        <WindowButton aria-label="Развернуть">
                            <svg width="12" height="11"><path d="M4.500 .5h7v6h-7zM.5 4.500h7v6h-7zM3 7h2v1H3z" fill="#fff" stroke="#505868" /></svg>
                        </WindowButton>
                        <WindowButton $close aria-label="Закрыть">
                            <svg width="12" height="10" viewBox="0 0 12 10">
                                <path d="M2 1l8 8M10 1l-8 8" stroke="#503838" strokeWidth="4" /><path d="M2 1l8 8M10 1l-8 8" stroke="#fff" strokeWidth="2.400" />
                            </svg>
                        </WindowButton>
                    </WindowButtons>
                </TitleBar>
                <MenuRow>
                    <Menu>
                        {['Файл', 'Сервис', 'Окна', 'Помощь'].map(name => <MenuItem key={name}>{name}</MenuItem>)}
                    </Menu>
                    <TestButton>
                        <svg width="20" height="20" viewBox="0 0 20 20">
                            <path d="M1.500 1.500h8l4 4v11h-12zM9.500 1.500v4h4" fill="#fff" stroke="#000" />
                            <circle cx="14" cy="14" r="4.500" fill="#d8dcc8" stroke="#404840" strokeWidth="2" strokeDasharray="2 1" />
                            <circle cx="14" cy="14" r="1.800" fill="#fff" stroke="#404840" />
                        </svg>
                        Выбор теста
                        <ArrowDown />
                    </TestButton>
                    <OrderGroup>
                        <label htmlFor="order">Порядок работы цилиндров</label>
                        <SelectBox $width={98} $height={20}>
                            <select id="order" defaultValue="1-3-4-2"><option>1-3-4-2</option><option>1-2-4-3</option></select>
                            <ArrowDown />
                        </SelectBox>
                        <Spinner>
                            <input aria-label="Цилиндр" value={cylinder} onChange={e => setCylinder(e.target.value)} />
                            <svg width="9" height="14" viewBox="0 0 9 14"><path d="M0 5h8L4 1zM0 9h8l-4 4z" /></svg>
                        </Spinner>
                    </OrderGroup>
                    <Rpm>
                        <strong>1°</strong>
                        <strong>737</strong>
                        <small>об./мин.</small>
                    </Rpm>
                </MenuRow>
                <TabBar>
                    <Tab $active $width={90} $color="#f0f0f0">Осциллограф</Tab>
                    <Tab $width={120} $color="linear-gradient(#d0a8d0, #b888b8)">Система зажигания</Tab>
                    <Tab $width={131} $color="linear-gradient(#d0d098, #bcbc78)">Сравнение цилиндров</Tab>
                    <Tab $width={197} $color="linear-gradient(#b4acd0, #9088b4)">Эффективность работы цилиндров</Tab>
                    <Tab $width={167} $color="linear-gradient(#acd4a8, #88bc84)">Анализ давления в цилиндре</Tab>
                    <Tab $width={102} $color="linear-gradient(#d8bcb0, #c4a494)">Электропитание</Tab>
                </TabBar>
                <Body>
                    <Toolbar>
                        {tools.map(([name, label, pressed]) => (
                            <Tool key={name} $pressed={pressed} aria-label={label}>
                                <svg width="24" height="24" viewBox="0 0 24 24">{icons[name]}</svg>
                            </Tool>
                        ))}
                    </Toolbar>
                    <Workspace>
                        <Oscillogram />
                        <ScrollRow>
                            <NavButton $width={17} aria-label="Сжать развёртку"><Round color="#000080" /></NavButton>
                            <SelectBox $width={69} $height={17} $flat>
                                <select aria-label="Длительность" defaultValue="227.8 мс"><option>227.8 мс</option></select>
                                <ArrowDown />
                            </SelectBox>
                            <NavButton $width={17} aria-label="Растянуть развёртку"><Round plus color="#900000" /></NavButton>
                            <SelectBox $width={64} $height={17} $flat>
                                <select aria-label="Кадр" defaultValue="17"><option>17</option></select>
                                <ArrowDown />
                            </SelectBox>
                            <NavButton $width={24} aria-label="В начало"><Back bar /></NavButton>
                            <NavButton $width={18} aria-label="Назад">
                                <svg width="5" height="8"><path d="M5 0v8L1 4z" /></svg>
                            </NavButton>
                            <NavButton $width={18} aria-label="Ползунок" />
                            <Track />
                            <NavButton $width={16} aria-label="Вперёд">
                                <svg width="5" height="8"><path d="M0 0v8l4-4z" /></svg>
                            </NavButton>
                            <NavButton $width={25} aria-label="В конец"><Play bar /></NavButton>
                            <NavButton $width={17} aria-label="Добавить"><Round plus color="#008000" /></NavButton>
                            <NavButton $width={23} aria-label="Первая"><Back bar /></NavButton>
                            <NavButton $width={24} aria-label="Предыдущая"><Back /></NavButton>
                            <PageNumber>1</PageNumber>
                            <NavButton $width={24} aria-label="Следующая"><Play /></NavButton>
                            <NavButton $width={24} aria-label="Последняя"><Play bar /></NavButton>
                            <NavButton $width={24} aria-label="Воспроизвести"><Play color="#008000" /></NavButton>
                            <NavButton $width={24} aria-label="Воспроизвести до конца"><Play color="#00f" /></NavButton>
                        </ScrollRow>
                    </Workspace>
                </Body>
                <Splitter><ArrowDown color="#3399ff" /><i /><ArrowDown color="#3399ff" /></Splitter>
                <Dock>
                    <ChannelPanel />
                    <Group $width={105} $color="#000080">
                        <legend>Частота</legend>
                        <Dial width={97} cx={46} cy={37} value="160K" labels={rateLabels.map(l => ({ ...l, y: l.y + 3 }))} pointer={-28} />
                    </Group>
                    <SyncPanel />
                    <ControlPanel />
                </Dock>
                <StatusBar>
                    <span>USB Осциллограф не подключен</span>
                    <span />
                    <span>1.6</span>
                </StatusBar>
                <TaskStrip />
                <SiteLink href="http://diamag-osc.com">http://diamag-osc.com</SiteLink>
            </Window>
        </Page>
    )
}

export default App
